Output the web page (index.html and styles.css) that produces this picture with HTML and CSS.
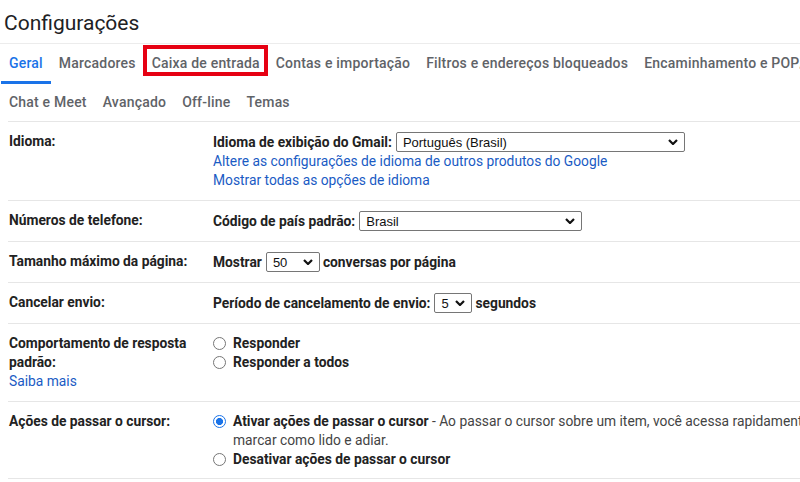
FILE: index.html
```html
<!DOCTYPE html>
<html lang="pt-BR">
<head>
<meta charset="utf-8">
<title>Configurações</title>
<link rel="stylesheet" href="styles.css">
</head>
<body>
<div class="page">
  <h1 class="title">Configurações</h1>
  <nav class="tabs">
    <div class="tab-row">
      <a class="tab active">Geral</a>
      <a class="tab">Marcadores</a>
      <a class="tab marked">Caixa de entrada<span class="mark"></span></a>
      <a class="tab">Contas e importação</a>
      <a class="tab">Filtros e endereços bloqueados</a>
      <a class="tab">Encaminhamento e POP/IMAP</a>
      <a class="tab">Complementos</a>
    </div>
    <div class="tab-row">
      <a class="tab">Chat e Meet</a>
      <a class="tab">Avançado</a>
      <a class="tab">Off-line</a>
      <a class="tab">Temas</a>
    </div>
  </nav>

  <div class="settings">
    <div class="row">
      <div class="label">Idioma:</div>
      <div class="value">
        <div class="line first"><b>Idioma de exibição do Gmail:</b> <span class="select w-lang"><span>Português (Brasil)</span><svg viewBox="0 0 10 6" class="chev"><path d="M1 1l4 4 4-4"/></svg></span></div>
        <div class="line"><a class="link">Altere as configurações de idioma de outros produtos do Google</a></div>
        <div class="line"><a class="link">Mostrar todas as opções de idioma</a></div>
      </div>
    </div>

    <div class="row">
      <div class="label">Números de telefone:</div>
      <div class="value">
        <div class="line first"><b>Código de país padrão:</b> <span class="select w-country"><span>Brasil</span><svg viewBox="0 0 10 6" class="chev"><path d="M1 1l4 4 4-4"/></svg></span></div>
      </div>
    </div>

    <div class="row">
      <div class="label">Tamanho máximo da página:</div>
      <div class="value">
        <div class="line first"><b>Mostrar</b> <span class="select w-size"><span>50</span><svg viewBox="0 0 10 6" class="chev"><path d="M1 1l4 4 4-4"/></svg></span> <b>conversas por página</b></div>
      </div>
    </div>

    <div class="row">
      <div class="label">Cancelar envio:</div>
      <div class="value">
        <div class="line first"><b>Período de cancelamento de envio:</b> <span class="select w-undo"><span>5</span><svg viewBox="0 0 10 6" class="chev"><path d="M1 1l4 4 4-4"/></svg></span> <b>segundos</b></div>
      </div>
    </div>

    <div class="row">
      <div class="label">
        <div>Comportamento de resposta padrão:</div>
        <a class="link normal">Saiba mais</a>
      </div>
      <div class="value">
        <label class="opt"><span class="radio"></span><b>Responder</b></label>
        <label class="opt"><span class="radio"></span><b>Responder a todos</b></label>
      </div>
    </div>

    <div class="row">
      <div class="label">Ações de passar o cursor:</div>
      <div class="value">
        <label class="opt"><span class="radio on"></span><span class="opt-text"><b>Ativar ações de passar o cursor</b> <span class="desc">- Ao passar o cursor sobre um item, você acessa rapidamente as ações de arquivar, excluir, marcar como lido e adiar.</span></span></label>
        <label class="opt"><span class="radio"></span><b>Desativar ações de passar o cursor</b></label>
      </div>
    </div>
  </div>
</div>
</body>
</html>
```

FILE: styles.css
```css
html, body {
  margin: 0;
  padding: 0;
  background: #fff;
  overflow: hidden;
}

.page {
  width: 1100px;
  font-family: Roboto, "Liberation Sans", Arial, sans-serif;
  color: #222;
}

.title {
  margin: 0;
  padding: 10px 0 0 4px;
  height: 43px;
  box-sizing: border-box;
  font-size: 21px;
  font-weight: 400;
  line-height: 26px;
  color: #202124;
}

.tabs {
  border-top: 1px solid #ececec;
}

.tab-row {
  display: flex;
  padding-left: 1px;
}

.tab {
  position: relative;
  display: flex;
  align-items: center;
  height: 40px;
  padding: 0 8px 2px;
  box-sizing: border-box;
  font-size: 14px;
  letter-spacing: 0.2px;
  font-weight: 500;
  color: #5f6368;
  white-space: nowrap;
  cursor: pointer;
}

.tab-row + .tab-row .tab {
  height: 37px;
}

.tab.active {
  color: #1a73e8;
  border-bottom: 3px solid #1a73e8;
  padding-top: 1px;
  padding-bottom: 0;
}

.mark {
  position: absolute;
  left: -1px;
  right: 0;
  top: 1px;
  bottom: 8px;
  border: 4px solid #e60012;
}

.settings {
  padding-left: 8px;
}

.row {
  display: flex;
  border-top: 1px solid #e6e6e6;
  padding: 10px 0 10px;
  font-size: 13.8px;
  line-height: 19px;
}

.row:last-child {
  border-bottom: 1px solid #e6e6e6;
  padding-bottom: 9px;
}

.label {
  width: 205px;
  flex: none;
  padding-left: 1px;
  font-weight: 700;
  box-sizing: border-box;
  padding-right: 14px;
}

.value {
  width: 800px;
}

.line {
  display: flex;
  align-items: center;
  min-height: 19px;
  white-space: nowrap;
}

.line.first {
  min-height: 20px;
}

b {
  font-weight: 700;
}

.link {
  color: #1a5bc4;
  cursor: pointer;
}

.link.normal {
  font-weight: 400;
}

.select {
  display: inline-flex;
  align-items: center;
  justify-content: space-between;
  height: 20px;
  box-sizing: border-box;
  margin: 0 3px 0 4px;
  padding: 0 6px 0 6px;
  border: 1px solid #767676;
  border-radius: 2px;
  font-family: "Liberation Sans", Arial, sans-serif;
  font-weight: 400;
  font-size: 13px;
  color: #111;
  background: #fff;
}

.chev {
  width: 10px;
  height: 6px;
  fill: none;
  stroke: #111;
  stroke-width: 2.2;
}

.w-lang { width: 289px; }
.w-country { width: 223px; }
.w-size { width: 54px; margin-left: 4px; }
.w-undo { width: 38px; }

.opt {
  display: flex;
  align-items: flex-start;
  min-height: 19px;
}

.radio {
  flex: none;
  width: 13px;
  height: 13px;
  box-sizing: border-box;
  border: 1px solid #767676;
  border-radius: 50%;
  margin: 3px 7px 0 0;
  background: #fff;
}

.radio.on {
  border: 1.5px solid #1a73e8;
  background: radial-gradient(circle, #1a73e8 0 3.3px, #fff 3.8px);
}

.opt-text {
  width: 775px;
}

.desc {
  color: #444;
  font-weight: 400;
}
```
